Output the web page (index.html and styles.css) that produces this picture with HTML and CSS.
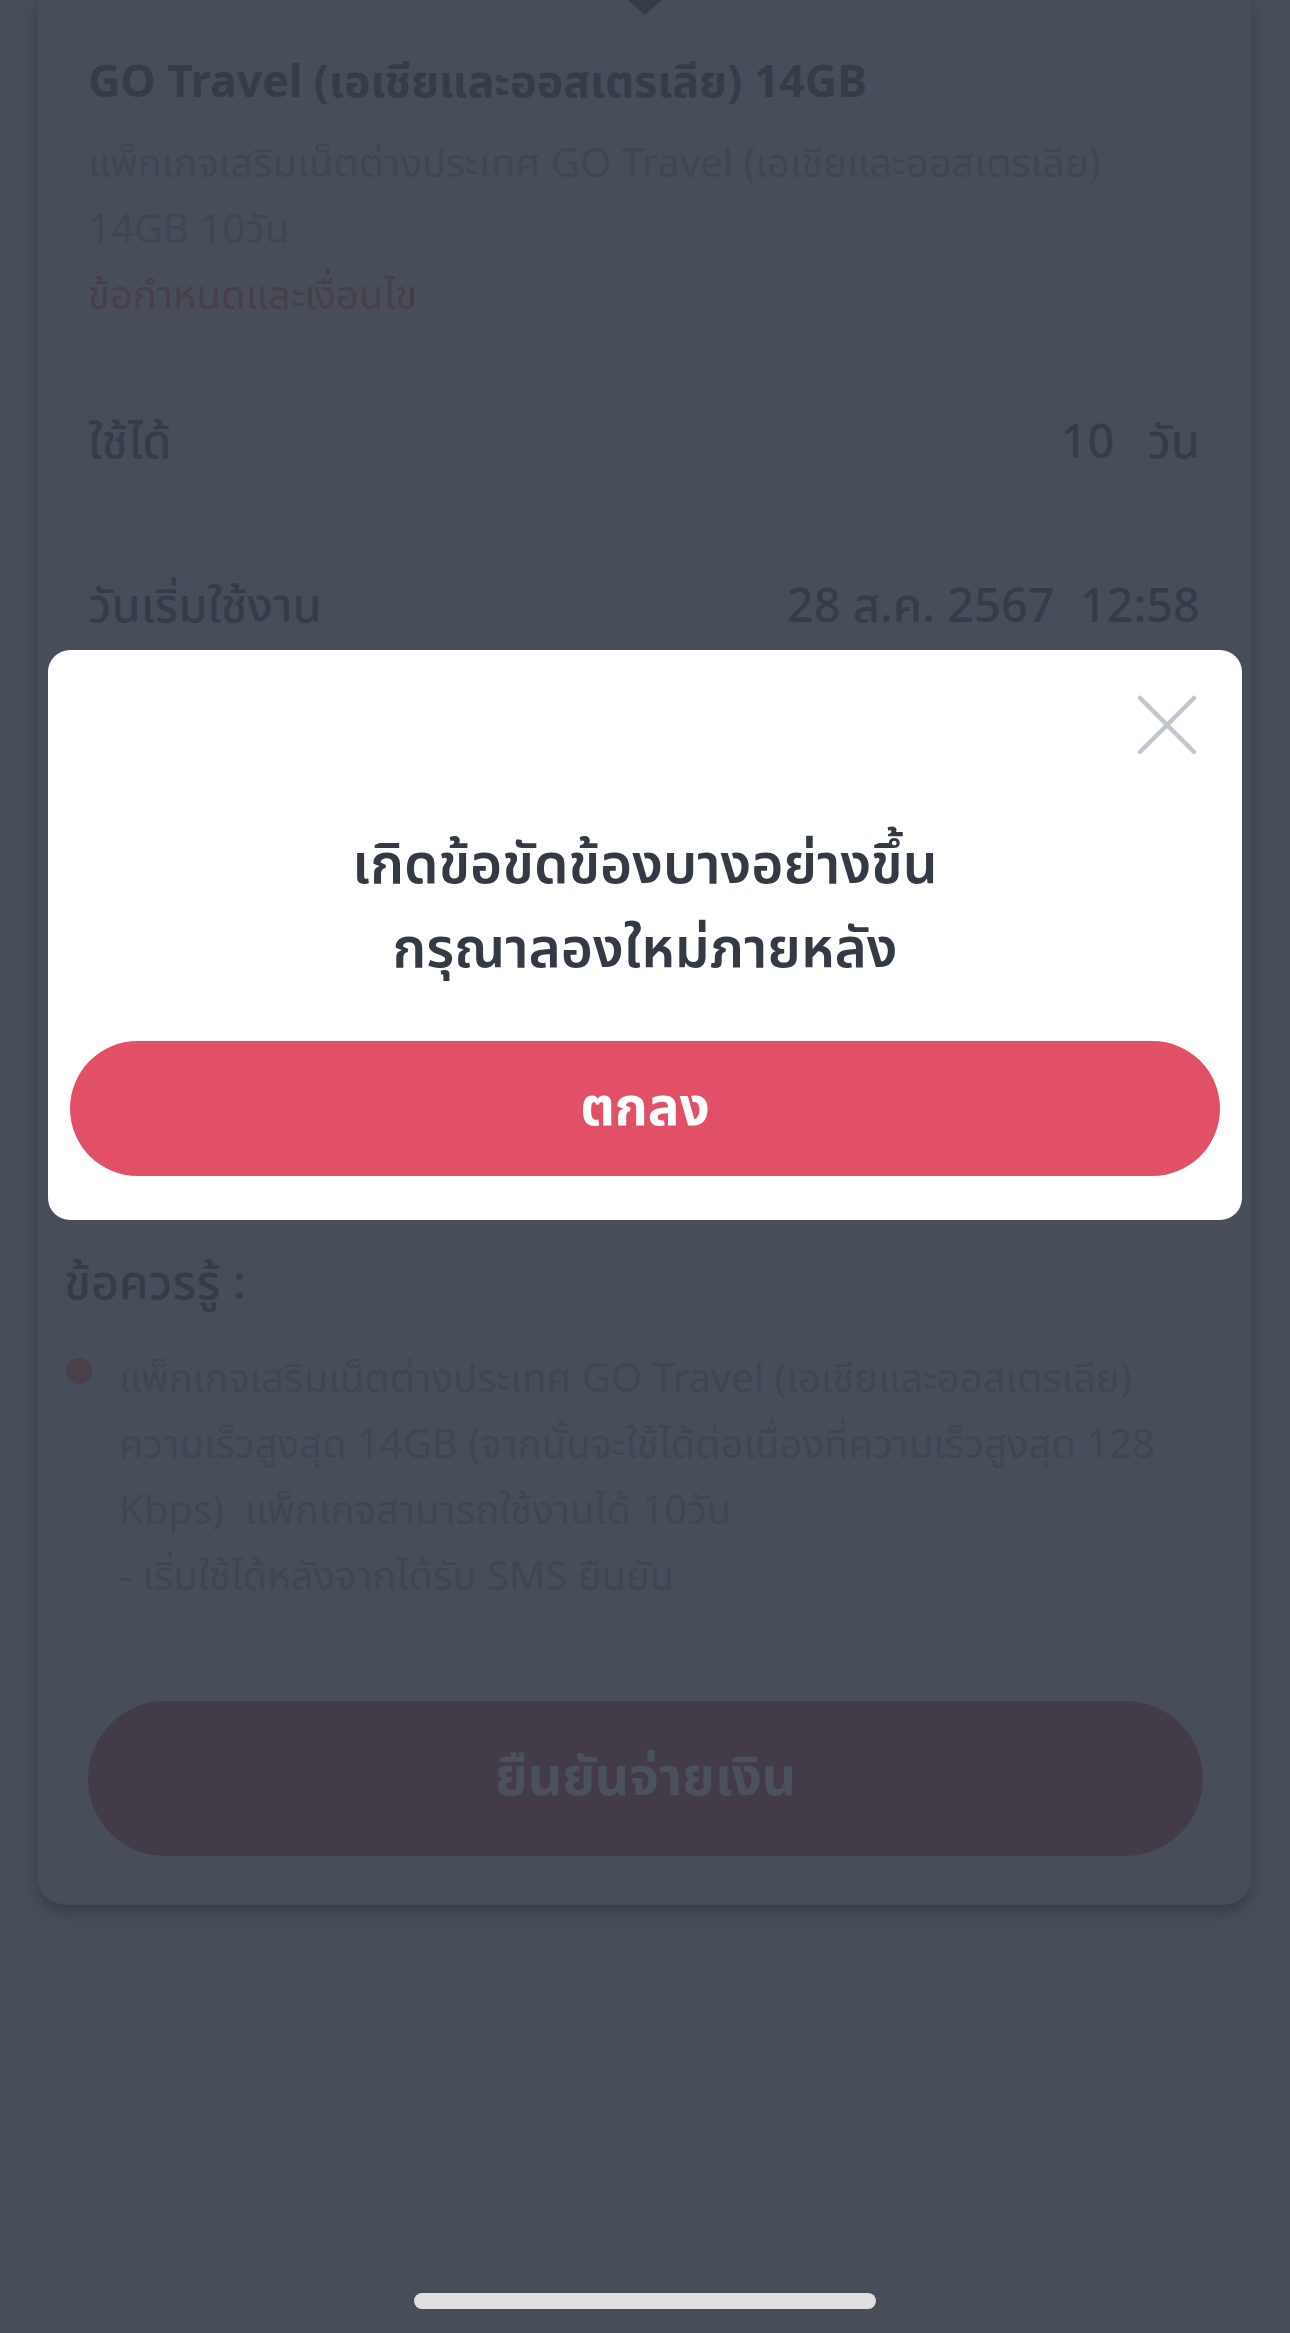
FILE: index.html
```
<!DOCTYPE html>
<html lang="th">
<head>
  <meta charset="UTF-8">
  <meta name="viewport" content="width=device-width, initial-scale=1.0">
  <title>GO Travel</title>
  <link rel="stylesheet" href="styles.css">
</head>

<body>
  <main class="page">
    <section class="package-card">
      <div class="package-info">
        <h2 class="package-title">GO Travel (เอเชียและออสเตรเลีย) 14GB</h2>
        <p class="package-desc">แพ็กเกจเสริมเน็ตต่างประเทศ GO Travel (เอเชียและออสเตรเลีย)<br>14GB 10วัน</p>
        <a class="package-terms" href="#">ข้อกำหนดและเงื่อนไข</a>
      </div>

      <div class="detail-list">
        <div class="detail-row row-valid">
          <span class="detail-label">ใช้ได้</span>
          <span class="detail-value">10<span class="unit">วัน</span></span>
        </div>
        <div class="detail-row row-start">
          <span class="detail-label">วันเริ่มใช้งาน</span>
          <span class="detail-value">28 ส.ค. 2567<span class="unit">12:58</span></span>
        </div>
      </div>

      <div class="notes">
        <h3 class="notes-title">ข้อควรรู้ :</h3>
        <ul class="notes-list">
          <li>แพ็กเกจเสริมเน็ตต่างประเทศ GO Travel (เอเชียและออสเตรเลีย)<br>ความเร็วสูงสุด 14GB (จากนั้นจะใช้ได้ต่อเนื่องที่ความเร็วสูงสุด 128<br>Kbps)&nbsp; แพ็กเกจสามารถใช้งานได้ 10วัน<br>- เริ่มใช้ได้หลังจากได้รับ SMS ยืนยัน</li>
        </ul>
      </div>

      <button class="pay-btn" disabled>ยืนยันจ่ายเงิน</button>
    </section>
  </main>

  <div class="modal-layer">
    <div class="modal">
      <div class="modal-head">
        <button class="modal-close" aria-label="ปิด">
          <svg width="60" height="60" viewBox="0 0 60 60">
            <path d="M3 3 L57 57 M57 3 L3 57" stroke="#c0c6cc" stroke-width="4.5" stroke-linecap="round" fill="none"/>
          </svg>
        </button>
      </div>
      <p class="modal-text">เกิดข้อขัดข้องบางอย่างขึ้น<br>กรุณาลองใหม่ภายหลัง</p>
      <button class="modal-ok">ตกลง</button>
    </div>
  </div>

  <div class="home-indicator"></div>
</body>
</html>
```

FILE: styles.css
```
body {
  margin: 0;
  min-height: 2333px;
  background-color: #474e59;
  font-family: "Noto Sans", "Noto Sans Thai", "Noto Sans CJK SC", sans-serif;
  color: #363c47;
}

.page {
  padding: 0 38px 0 37px;
}

/* card behind the dimmed layer */
.package-card {
  position: relative;
  background-color: #474e59;
  border: 1px solid #434a55;
  border-top: none;
  border-radius: 0 0 28px 28px;
  box-shadow: 0 8px 12px rgba(30, 35, 44, 0.35);
  padding: 0 0 48px;
}

.package-card::before {
  content: "";
  position: absolute;
  top: 0;
  left: 590px;
  border-left: 17px solid transparent;
  border-right: 17px solid transparent;
  border-top: 15px solid #363c47;
}

.package-info {
  padding: 49px 52px 0 50px;
}

.package-title {
  margin: 0;
  font-size: 44.7px;
  line-height: 62px;
  font-weight: 700;
  color: #363c47;
}

.package-desc {
  margin: 18px 0 0;
  font-size: 40px;
  line-height: 66px;
  color: #3f4651;
}

.package-terms {
  display: block;
  font-size: 40px;
  line-height: 66px;
  color: #483e4a;
  text-decoration: none;
}

.detail-list {
  margin: 41px 39px 0 39px;
}

.detail-row {
  display: flex;
  justify-content: space-between;
  border-top: 1px solid #444b56;
  padding: 0 12px 0 11px;
  font-size: 47px;
  line-height: 60px;
  font-weight: 500;
}

.row-valid {
  padding-top: 41px;
  padding-bottom: 50px;
}

.row-start {
  padding-top: 53px;
  padding-bottom: 40px;
}

.row-valid .unit {
  margin-left: 33px;
}

.row-start .unit {
  margin-left: 25px;
}

.notes {
  margin-top: 574px;
  padding: 0 40px 0 26px;
}

.notes-title {
  margin: 0;
  font-size: 48px;
  line-height: 66px;
  font-weight: 500;
  color: #363c47;
}

.notes-list {
  list-style: none;
  margin: 30px 0 0;
  padding: 0 0 0 55px;
}

.notes-list li {
  position: relative;
  font-size: 40px;
  line-height: 66px;
  color: #3f4651;
}

.notes-list li::before {
  content: "";
  position: absolute;
  left: -53px;
  top: 14px;
  width: 26px;
  height: 26px;
  border-radius: 50%;
  background-color: #4b3f4a;
}

.pay-btn {
  display: block;
  width: 1115px;
  height: 155px;
  margin: 93px 0 0 50px;
  border: none;
  border-radius: 78px;
  background-color: #433b47;
  color: #4b525d;
  font-family: inherit;
  font-size: 53px;
  font-weight: 700;
}

/* popup */
.modal-layer {
  position: fixed;
  top: 0;
  left: 0;
  right: 0;
  bottom: 0;
  display: flex;
  justify-content: center;
  align-items: flex-start;
  padding-top: 650px;
}

.modal {
  width: 1194px;
  background-color: #fff;
  border-radius: 22px;
  padding: 0 22px 44px;
  box-sizing: border-box;
}

.modal-head {
  display: flex;
  justify-content: flex-end;
  padding: 45px 23px 0 0;
}

.modal-close {
  border: none;
  background: none;
  padding: 0;
  width: 60px;
  height: 60px;
}

.modal-close svg {
  display: block;
}

.modal-text {
  margin: 65px 0 0;
  text-align: center;
  font-size: 55px;
  line-height: 84px;
  font-weight: 600;
  color: #343a44;
}

.modal-ok {
  display: block;
  width: 100%;
  height: 135px;
  margin-top: 53px;
  border: none;
  border-radius: 68px;
  background-color: #e25068;
  color: #fff;
  font-family: inherit;
  font-size: 53px;
  font-weight: 700;
}

.home-indicator {
  position: fixed;
  left: 414px;
  top: 2293px;
  width: 462px;
  height: 16px;
  border-radius: 8px;
  background-color: #e0e0e0;
}
```
